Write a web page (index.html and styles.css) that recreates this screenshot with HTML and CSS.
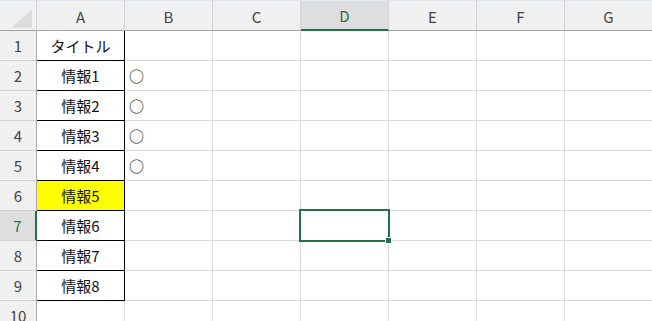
FILE: index.html
```html
<!DOCTYPE html>
<html lang="ja">
<head>
<meta charset="utf-8">
<title>Sheet</title>
<link rel="stylesheet" href="styles.css">
</head>
<body>
<div class="sheet">
  <div class="grid">
    <div class="hd corner"><span class="tri"></span></div>
    <div class="hd col">A</div>
    <div class="hd col">B</div>
    <div class="hd col">C</div>
    <div class="hd col sel">D</div>
    <div class="hd col">E</div>
    <div class="hd col">F</div>
    <div class="hd col">G</div>

    <div class="hd row">1</div>
    <div class="c a">タイトル</div><div class="c"></div><div class="c"></div><div class="c"></div><div class="c"></div><div class="c"></div><div class="c"></div>

    <div class="hd row">2</div>
    <div class="c a">情報1</div><div class="c b">○</div><div class="c"></div><div class="c"></div><div class="c"></div><div class="c"></div><div class="c"></div>

    <div class="hd row">3</div>
    <div class="c a">情報2</div><div class="c b">○</div><div class="c"></div><div class="c"></div><div class="c"></div><div class="c"></div><div class="c"></div>

    <div class="hd row">4</div>
    <div class="c a">情報3</div><div class="c b">○</div><div class="c"></div><div class="c"></div><div class="c"></div><div class="c"></div><div class="c"></div>

    <div class="hd row">5</div>
    <div class="c a">情報4</div><div class="c b">○</div><div class="c"></div><div class="c"></div><div class="c"></div><div class="c"></div><div class="c"></div>

    <div class="hd row">6</div>
    <div class="c a yellow">情報5</div><div class="c"></div><div class="c"></div><div class="c"></div><div class="c"></div><div class="c"></div><div class="c"></div>

    <div class="hd row rsel">7</div>
    <div class="c a">情報6</div><div class="c"></div><div class="c"></div><div class="c"></div><div class="c"></div><div class="c"></div><div class="c"></div>

    <div class="hd row">8</div>
    <div class="c a">情報7</div><div class="c"></div><div class="c"></div><div class="c"></div><div class="c"></div><div class="c"></div><div class="c"></div>

    <div class="hd row">9</div>
    <div class="c a">情報8</div><div class="c"></div><div class="c"></div><div class="c"></div><div class="c"></div><div class="c"></div><div class="c"></div>

    <div class="hd row">10</div>
    <div class="c"></div><div class="c"></div><div class="c"></div><div class="c"></div><div class="c"></div><div class="c"></div><div class="c"></div>
  </div>
  <div class="selection"><span class="handle"></span></div>
</div>
</body>
</html>
```

FILE: styles.css
```css
html, body {
  margin: 0;
  padding: 0;
  background: #ffffff;
  overflow: hidden;
}

.sheet {
  position: relative;
  width: 652px;
  height: 321px;
  overflow: hidden;
  font-family: "Noto Sans CJK JP", "Noto Sans", sans-serif;
}

.grid {
  display: grid;
  grid-template-columns: 37px repeat(7, 88px);
  grid-template-rows: 31px repeat(10, 30px);
}

.grid > div {
  box-sizing: border-box;
  display: flex;
  align-items: center;
}

.hd {
  background: #f0f0f0;
  color: #444444;
  font-size: 15px;
  justify-content: center;
}

.corner {
  position: relative;
  border-top: 1px solid #e3e8ee;
  border-right: 1px solid #d2d2d2;
  border-bottom: 1px solid #a3a3a3;
}

.tri {
  position: absolute;
  left: 11px;
  top: 8px;
  width: 0;
  height: 0;
  border-style: solid;
  border-width: 0 0 19px 21px;
  border-color: transparent transparent #dcdcdc transparent;
}

.col {
  border-top: 1px solid #e3e8ee;
  border-right: 1px solid #d2d2d2;
  border-bottom: 1px solid #a3a3a3;
  padding-top: 1px;
}

.col.sel {
  background: #dedede;
  color: #217346;
  border-bottom: 2px solid #217346;
}

.row {
  border-right: 1px solid #a8a8a8;
  border-bottom: 1px solid #d2d2d2;
}

.row.rsel {
  background: #dedede;
  color: #217346;
  border-right: 2px solid #217346;
}

.c {
  border-right: 1px solid #dadada;
  border-bottom: 1px solid #dadada;
  color: #111111;
  font-size: 15px;
}

.c.a {
  justify-content: center;
  border-right: 1px solid #000000;
  border-bottom: 1px solid #000000;
}

.c.b {
  padding-left: 4px;
  font-size: 15px;
}

.c.yellow {
  background: #ffff00;
}

.selection {
  position: absolute;
  left: 299px;
  top: 209px;
  width: 91px;
  height: 33px;
  box-sizing: border-box;
  border: 2px solid #217346;
}

.handle {
  position: absolute;
  right: -4px;
  bottom: -4px;
  width: 5px;
  height: 5px;
  background: #217346;
  border: 1px solid #ffffff;
}
```
